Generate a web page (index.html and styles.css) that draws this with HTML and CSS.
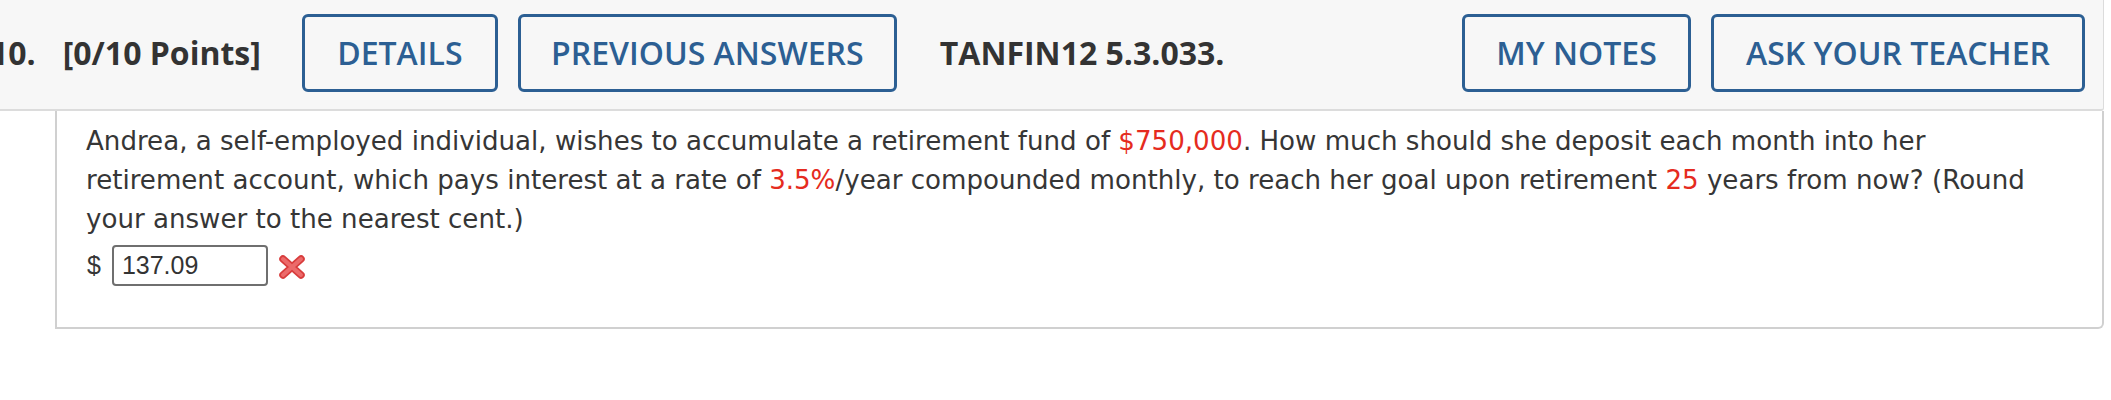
FILE: index.html
```html
<!DOCTYPE html>
<html lang="en">
<head>
<meta charset="utf-8">
<title>Question 10</title>
<link rel="stylesheet" href="styles.css">
</head>
<body>
<div class="question">
  <div class="qhead">
    <div class="qnum"><span class="num">10.</span><span class="pts">[0/10 Points]</span></div>
    <div class="btn btn-details">DETAILS</div>
    <div class="btn btn-prev">PREVIOUS ANSWERS</div>
    <div class="qid">TANFIN12 5.3.033.</div>
    <div class="spacer"></div>
    <div class="btn btn-notes">MY NOTES</div>
    <div class="btn btn-ask">ASK YOUR TEACHER</div>
  </div>
  <div class="qbody">
    <p class="qtext">Andrea, a self-employed individual, wishes to accumulate a retirement fund of <span class="red">$750,000</span>. How much should she deposit each month into her retirement account, which pays interest at a rate of <span class="red">3.5%</span>/year compounded monthly, to reach her goal upon retirement <span class="red">25</span> years from now? (Round your answer to the nearest cent.)</p>
    <div class="answer">
      <span class="dollar">$</span>
      <input class="ans-input" type="text" value="137.09">
      <svg class="wrong" width="28" height="26" viewBox="0 0 28 26" aria-label="incorrect">
        <path d="M5 5 L23 21 M23 5 L5 21" stroke="#d83c3c" stroke-width="7.5" stroke-linecap="round" fill="none"/>
        <path d="M5 5 L23 21 M23 5 L5 21" stroke="#ec6a6a" stroke-width="4" stroke-linecap="round" fill="none"/>
      </svg>
    </div>
  </div>
</div>
</body>
</html>
```

FILE: styles.css
```css
html, body {
  margin: 0;
  padding: 0;
  background: #ffffff;
}

body {
  width: 2111px;
  overflow: hidden;
}

.question {
  width: 2104px;
}

.qhead {
  box-sizing: border-box;
  height: 111px;
  background: #f7f7f7;
  border-right: 1px solid #dcdcdc;
  border-bottom: 2px solid #dcdcdc;
  border-bottom-right-radius: 3px;
  display: flex;
  align-items: center;
  gap: 20px;
  padding: 0 18px 4px 0;
  font-family: "Open Sans", "Liberation Sans", sans-serif;
  font-size: 32px;
  color: #333333;
}

.qnum {
  display: flex;
  align-items: center;
  font-weight: 700;
  margin-left: -10px;
  margin-right: 21px;
  white-space: nowrap;
}

.qnum .num {
  margin-right: 27px;
}

.btn {
  box-sizing: border-box;
  height: 78px;
  display: flex;
  align-items: center;
  justify-content: center;
  border: 3px solid #2c5f93;
  border-radius: 6px;
  color: #2c5f93;
  font-weight: 600;
  white-space: nowrap;
  padding: 0 30px;
}

.btn-details { width: 196px; }
.btn-prev { width: 379px; }
.btn-notes { width: 229px; }
.btn-ask { width: 374px; }

.qid {
  font-weight: 700;
  margin-left: 23px;
  white-space: nowrap;
}

.spacer {
  flex: 1;
}

.qbody {
  box-sizing: border-box;
  margin-left: 55px;
  width: 2049px;
  height: 218px;
  border: 2px solid #d0d0d0;
  border-top: 0;
  border-bottom-right-radius: 6px;
  padding: 11px 50px 0 29px;
  font-family: "DejaVu Sans", Verdana, sans-serif;
  font-size: 26.1px;
  color: #363636;
}

.qtext {
  margin: 0;
  line-height: 39px;
}

.red {
  color: #e52b20;
}

.answer {
  display: flex;
  align-items: center;
  margin-top: 6px;
  font-family: "Liberation Sans", Arial, sans-serif;
}

.dollar {
  font-size: 25px;
  margin-left: 1px;
  margin-right: 11px;
}

.ans-input {
  box-sizing: border-box;
  width: 156px;
  height: 41px;
  border: 2px solid #6f6f6f;
  border-radius: 4px;
  padding: 0 8px;
  font-family: "Liberation Sans", Arial, sans-serif;
  font-size: 25px;
  color: #333333;
  background: #ffffff;
  margin: 0;
}

.wrong {
  margin-left: 10px;
  margin-top: 2px;
}
```
